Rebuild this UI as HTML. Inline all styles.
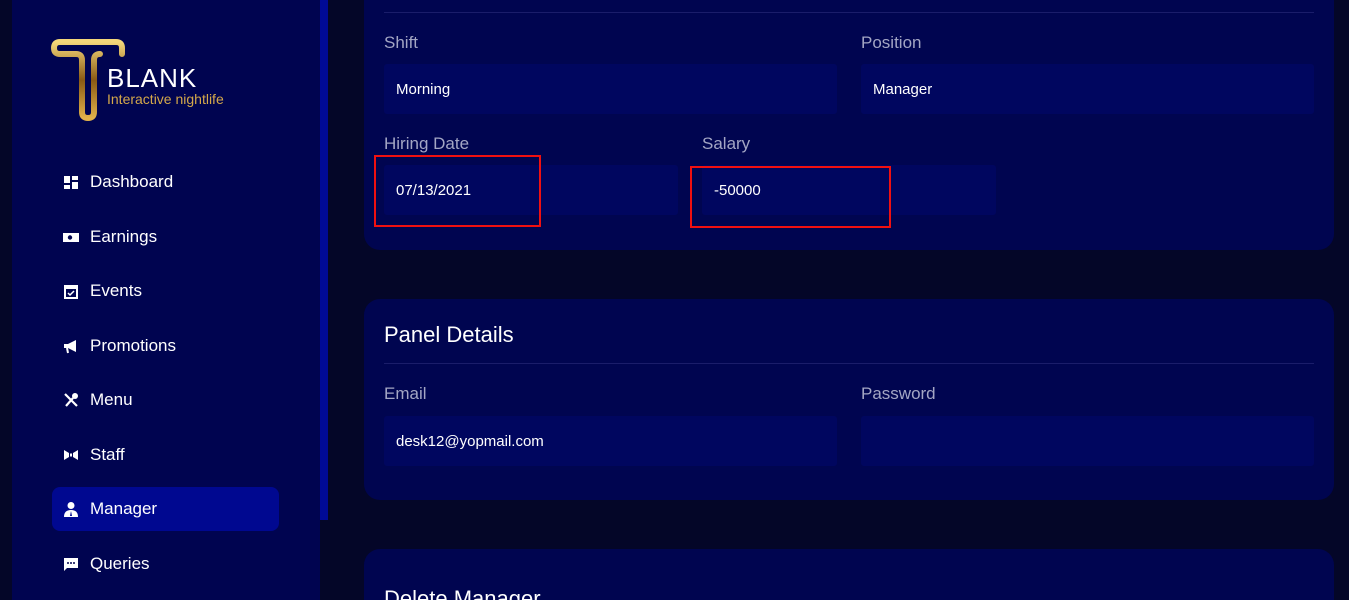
<!DOCTYPE html>
<html style="height:600px;overflow:hidden"><head><meta charset="utf-8"><style>
*{box-sizing:border-box;margin:0;padding:0}
body{width:1349px;height:600px;overflow:hidden;background:#040628;font-family:"Liberation Sans",sans-serif;position:relative}
.side{position:absolute;left:12px;top:0;width:308px;height:600px;background:#000450}
.sb{position:absolute;left:320px;top:0;width:8px;height:520px;background:#000a96}
.nav{position:absolute;left:52px;width:227px;height:44px;color:#fff;font-size:17px;display:flex;align-items:center;border-radius:8px}
.nav svg{position:absolute;left:11px;width:16px;height:16px}
.nav span{position:absolute;left:38px}
.nav.act{background:#000890}
.card{position:absolute;left:364px;width:970px;background:#000550;border-radius:16px}
.lbl{position:absolute;color:#a3a6c4;font-size:17px}
.inp{position:absolute;height:50px;background:#00065f;border-radius:3px;color:#fff;font-size:15px;padding-left:12px;display:flex;align-items:center}
.hr{position:absolute;left:384px;width:930px;height:1px;background:#1a1d6a}
.ttl{position:absolute;left:384px;color:#fff;font-size:22px}
.red{position:absolute;border:2px solid #f01010}
</style></head><body>
<div class="side"></div><div class="sb"></div>
<svg style="position:absolute;left:50px;top:38px" width="80" height="84" viewBox="0 0 80 84">
<defs><linearGradient id="g" x1="0" y1="0" x2="0" y2="1"><stop offset="0" stop-color="#f4d77a"/><stop offset=".5" stop-color="#8a5a14"/><stop offset="1" stop-color="#e2b24a"/></linearGradient></defs>
<path d="M72 16 V10 Q72 4 66 4 H10 Q4 4 4 10 Q4 16 10 16 H26 Q32 16 32 22 V74 Q32 80 38 80 Q44 80 44 74 V22 Q44 16 50 16" fill="none" stroke="url(#g)" stroke-width="6" stroke-linecap="round"/>
</svg>
<div style="position:absolute;left:107px;top:63px;color:#fff;font-size:26px;letter-spacing:1px">BLANK</div>
<div style="position:absolute;left:107px;top:91px;color:#d4a84a;font-size:14px">Interactive nightlife</div>

<div class="nav" style="top:160px"><svg viewBox="0 0 16 16"><rect x="1" y="2" width="6" height="7" fill="#fff"/><rect x="9" y="2" width="6" height="4" fill="#fff"/><rect x="1" y="11" width="6" height="4" fill="#fff"/><rect x="9" y="8" width="6" height="7" fill="#fff"/></svg><span>Dashboard</span></div>
<div class="nav" style="top:215px"><svg viewBox="0 0 16 16"><path d="M0 4 H16 V13 H0 Z" fill="#fff"/><circle cx="7" cy="8.5" r="2.2" fill="#000450"/></svg><span>Earnings</span></div>
<div class="nav" style="top:269px"><svg viewBox="0 0 16 16"><rect x="2" y="3" width="12" height="12" fill="none" stroke="#fff" stroke-width="2"/><rect x="2" y="3" width="12" height="3" fill="#fff"/><path d="M5 10 L7 12 L11 8" stroke="#fff" stroke-width="1.5" fill="none"/></svg><span>Events</span></div>
<div class="nav" style="top:324px"><svg viewBox="0 0 16 16"><path d="M1 6 H5 L13 2 V14 L5 10 H1 Z" fill="#fff"/><path d="M4 10 L5 15" stroke="#fff" stroke-width="2"/></svg><span>Promotions</span></div>
<div class="nav" style="top:378px"><svg viewBox="0 0 16 16"><path d="M2 2 L14 14 M3 14 L10 6" stroke="#fff" stroke-width="2.2"/><ellipse cx="12" cy="4" rx="3" ry="3" fill="#fff"/></svg><span>Menu</span></div>
<div class="nav" style="top:433px"><svg viewBox="0 0 16 16"><path d="M1 3 L6 6 V10 L1 13 Z M15 3 L10 6 V10 L15 13 Z" fill="#fff"/><rect x="7" y="6.5" width="2" height="3" fill="#fff"/></svg><span>Staff</span></div>
<div class="nav act" style="top:487px"><svg viewBox="0 0 16 16"><circle cx="8" cy="4.5" r="3.5" fill="#fff"/><path d="M1 16 Q1 9 8 9 Q15 9 15 16 Z" fill="#fff"/><path d="M8 10 L7 15 H9 Z" fill="#000890"/></svg><span>Manager</span></div>
<div class="nav" style="top:542px"><svg viewBox="0 0 16 16"><path d="M1 2 H15 V12 H4 L1 15 Z" fill="#fff"/><circle cx="5" cy="7" r="1" fill="#000450"/><circle cx="8" cy="7" r="1" fill="#000450"/><circle cx="11" cy="7" r="1" fill="#000450"/></svg><span>Queries</span></div>

<div class="card" style="top:-20px;height:270px"></div>
<div class="hr" style="top:12px"></div>
<div class="lbl" style="left:384px;top:33px">Shift</div>
<div class="lbl" style="left:861px;top:33px">Position</div>
<div class="inp" style="left:384px;top:64px;width:453px">Morning</div>
<div class="inp" style="left:861px;top:64px;width:453px">Manager</div>
<div class="lbl" style="left:384px;top:134px">Hiring Date</div>
<div class="lbl" style="left:702px;top:134px">Salary</div>
<div class="inp" style="left:384px;top:165px;width:294px">07/13/2021</div>
<div class="inp" style="left:702px;top:165px;width:294px">-50000</div>
<div class="red" style="left:374px;top:155px;width:167px;height:72px"></div>
<div class="red" style="left:690px;top:166px;width:201px;height:62px"></div>

<div class="card" style="top:299px;height:201px"></div>
<div class="ttl" style="top:322px">Panel Details</div>
<div class="hr" style="top:363px"></div>
<div class="lbl" style="left:384px;top:384px">Email</div>
<div class="lbl" style="left:861px;top:384px">Password</div>
<div class="inp" style="left:384px;top:416px;width:453px">desk12@yopmail.com</div>
<div class="inp" style="left:861px;top:416px;width:453px"></div>

<div class="card" style="top:549px;height:51px;border-radius:16px 16px 0 0"></div>
<div class="ttl" style="top:586px;height:14px;overflow:hidden">Delete Manager</div>
</body></html>
